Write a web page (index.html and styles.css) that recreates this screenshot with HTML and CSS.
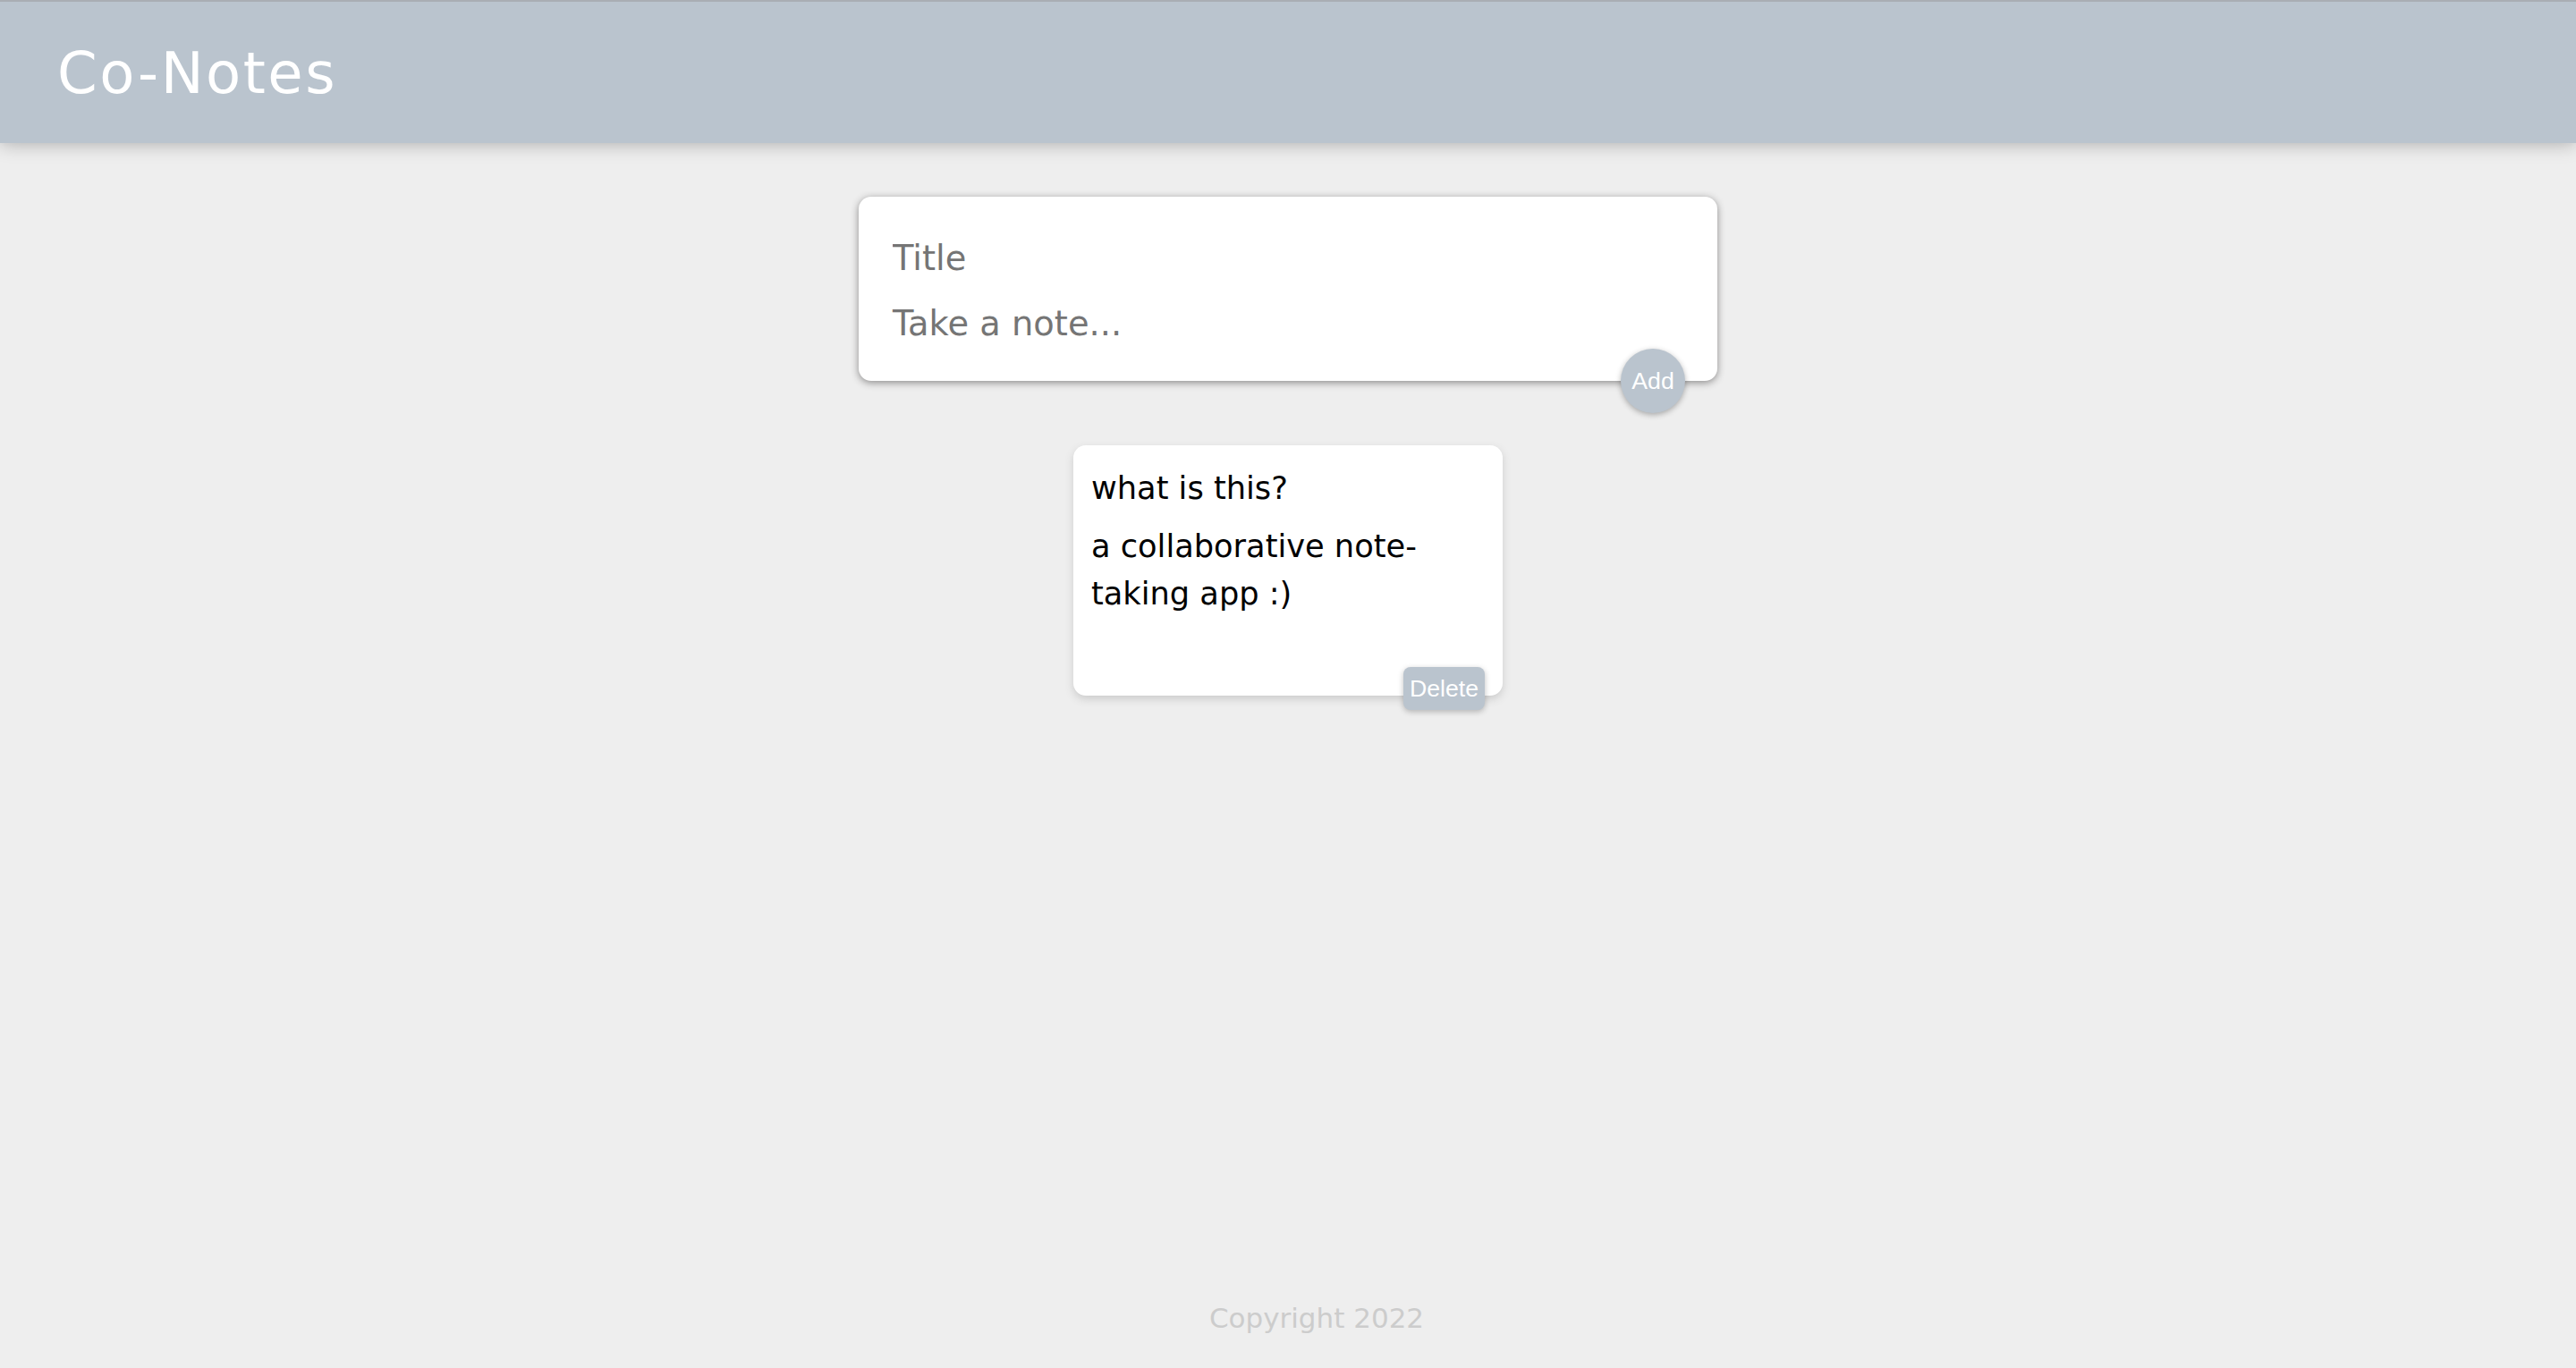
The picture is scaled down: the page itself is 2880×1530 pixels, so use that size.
FILE: index.html
```html
<!DOCTYPE html>
<html lang="en">
<head>
<meta charset="utf-8">
<title>Co-Notes</title>
<link rel="stylesheet" href="styles.css">
</head>
<body>
  <header class="app-header">
    <h1 class="app-title">Co-Notes</h1>
  </header>

  <form class="create-note">
    <input class="create-input" name="title" placeholder="Title">
    <textarea class="create-text" name="content" placeholder="Take a note..." rows="1"></textarea>
    <button class="add-btn" type="button">Add</button>
  </form>

  <main class="notes">
    <div class="note">
      <h1 class="note-title">what is this?</h1>
      <p class="note-body">a collaborative note-taking app :)</p>
      <div class="note-actions">
        <button class="delete-btn" type="button">Delete</button>
      </div>
    </div>
  </main>

  <footer class="app-footer">
    <p class="copyright">Copyright 2022</p>
  </footer>
</body>
</html>
```

FILE: styles.css
```css
* {
  box-sizing: border-box;
  margin: 0;
  padding: 0;
}

html, body {
  height: 100%;
}

body {
  background: #eeeeee;
  font-family: "DejaVu Sans", "Open Sans", sans-serif;
  padding: 0 32px;
  min-height: 100vh;
  display: flex;
  flex-direction: column;
}

.app-header {
  background-color: #bac4ce;
  margin: 0 -32px;
  padding: 33px 64px 31px 64px;
  border-top: 2px solid #a9aeb4;
  box-shadow: 0 0 20px 0 rgba(0, 0, 0, 0.3);
  position: relative;
  z-index: 1;
}

.app-title {
  color: #ffffff;
  font-family: "DejaVu Sans", sans-serif;
  font-weight: 400;
  font-size: 64px;
  line-height: 94px;
  letter-spacing: 2.5px;
}

.create-note {
  position: relative;
  width: 960px;
  margin: 60px auto 40px auto;
  background: #ffffff;
  padding: 30px;
  border-radius: 14px;
  box-shadow: 0 2px 8px rgb(138, 137, 137);
}

.create-input,
.create-text {
  display: block;
  width: 100%;
  border: none;
  outline: none;
  padding: 10px 8px 6px 8px;
  font-family: inherit;
  font-size: 38.4px;
  line-height: 57px;
  height: 73px;
  color: #333333;
  background: transparent;
  resize: none;
  overflow: hidden;
}

.create-input::placeholder,
.create-text::placeholder {
  color: #757575;
}

.add-btn {
  position: absolute;
  right: 36px;
  bottom: -36px;
  width: 72px;
  height: 72px;
  border: none;
  border-radius: 50%;
  background: #bac4ce;
  color: #ffffff;
  font-family: "Liberation Sans", Arial, sans-serif;
  font-size: 26.67px;
  box-shadow: 0 2px 6px rgba(0, 0, 0, 0.3);
  cursor: pointer;
}

.notes {
  display: flex;
  flex-wrap: wrap;
  justify-content: center;
}

.note {
  width: 480px;
  margin: 32px;
  padding: 22px 20px 20px 20px;
  background: #ffffff;
  border-radius: 14px;
  box-shadow: 0 4px 10px #cccccc;
  display: flex;
  flex-direction: column;
}

.note-title {
  font-size: 35.2px;
  font-weight: 400;
  line-height: 1.5;
  margin-bottom: 12px;
  color: #000000;
}

.note-body {
  font-size: 35.2px;
  line-height: 1.5;
  margin-bottom: 20px;
  color: #000000;
  white-space: pre-wrap;
  word-wrap: break-word;
}

.note-actions {
  display: flex;
  justify-content: flex-end;
  height: 48px;
}

.delete-btn {
  position: relative;
  top: 36px;
  height: 48px;
  padding: 0 7px;
  border: none;
  border-radius: 8px;
  background: #bac4ce;
  color: #ffffff;
  font-family: "Liberation Sans", Arial, sans-serif;
  font-size: 26.67px;
  box-shadow: 0 2px 6px rgba(0, 0, 0, 0.25);
  cursor: pointer;
}

.app-footer {
  margin-top: auto;
  height: 80px;
  padding-left: 64px;
  text-align: center;
}

.copyright {
  color: #cccccc;
  font-size: 31px;
  line-height: 48px;
}
```
